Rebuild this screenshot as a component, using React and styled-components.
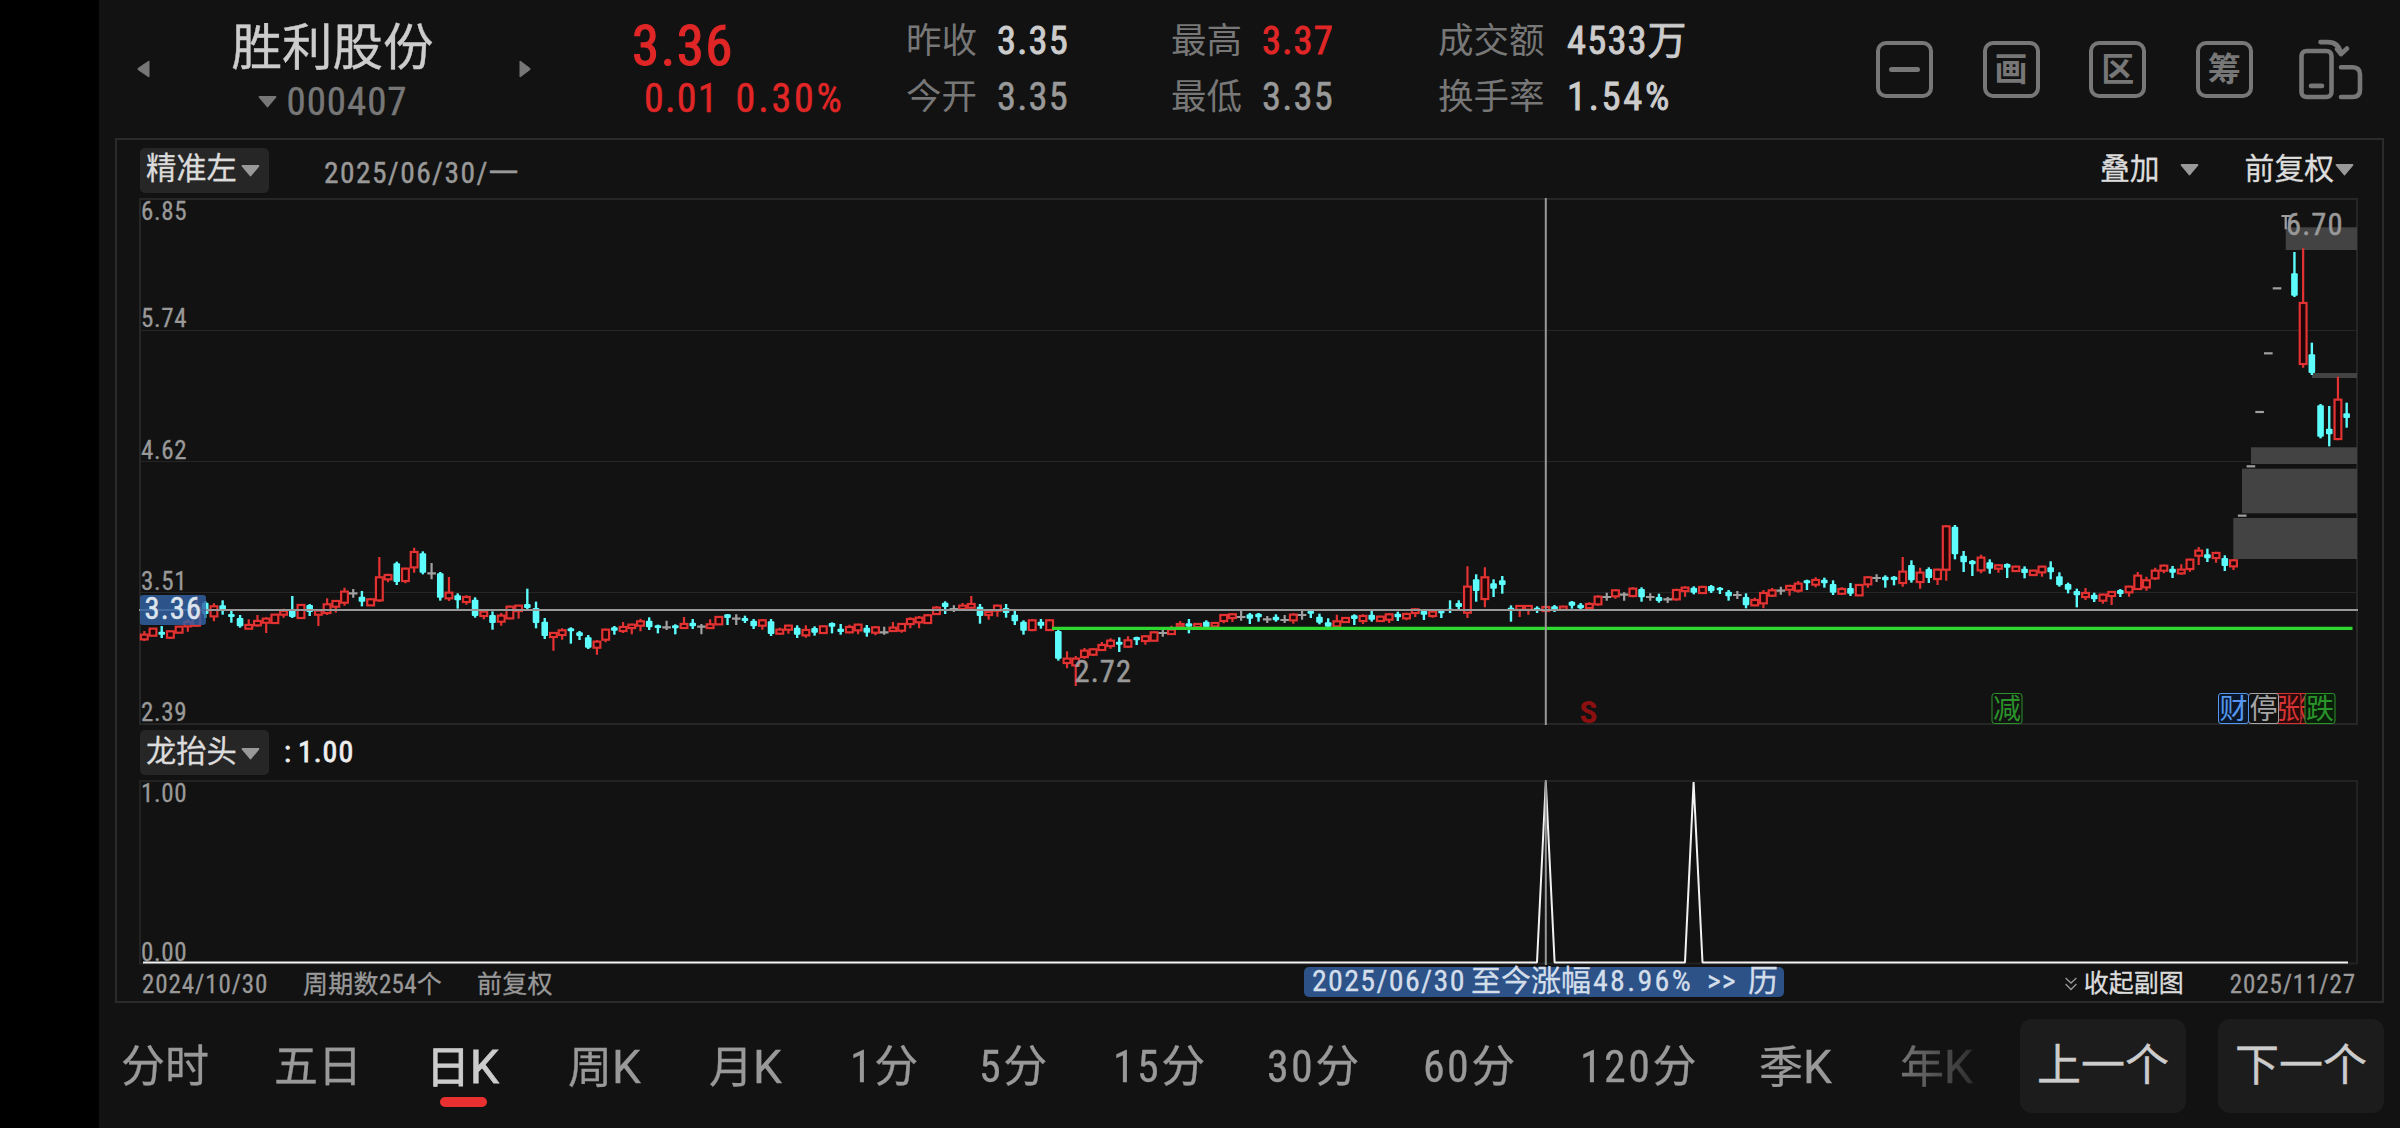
import React from "react";
import styled, { createGlobalStyle } from "styled-components";

const colors = {
  page: "#121212",
  line: "#2b2b2b",
  chip: "#262626",
  bright: "#dcdcdc",
  light: "#cccccc",
  mid: "#999999",
  dim: "#777777",
  red: "#e02626",
  up: "#e23232",
  down: "#5dfdfd",
  green: "#2fd82f",
  blue: "#2c5288",
};

const fonts = `"Roboto Condensed", Roboto, "Noto Sans CJK SC", sans-serif`;

const GlobalStyle = createGlobalStyle`
  * {
    box-sizing: border-box;
  }
  body {
    margin: 0;
    background: #000;
    font-family: ${fonts};
    overflow: hidden;
  }
`;

const Page = styled.div`
  width: 2400px;
  height: 1128px;
  padding-left: 99px;
  background: #000;
`;

const Screen = styled.div`
  height: 100%;
  display: flex;
  flex-direction: column;
  background: ${colors.page};
`;

const Header = styled.header`
  height: 138px;
  flex: none;
  display: flex;
  padding-left: 38px;
`;

const Pager = styled.div`
  width: 13px;
  padding-top: 60px;
  svg {
    display: block;
  }
`;

const Stock = styled.div`
  width: 369px;
  padding: 13px 4px 0 0;
  display: flex;
  flex-direction: column;
  align-items: center;
`;

const StockName = styled.div`
  font-size: 50.5px;
  line-height: 69px;
  color: ${colors.light};
  -webkit-text-stroke: 0.4px;
`;

const StockCode = styled.div`
  display: flex;
  align-items: center;
  gap: 10px;
  font-size: 39px;
  line-height: 40px;
  letter-spacing: 0.9px;
  color: ${colors.dim};
  -webkit-text-stroke: 0.4px;
`;

const Quote = styled.div`
  width: 374px;
  padding: 13px 0 0 100px;
  color: ${colors.red};
`;

const Price = styled.div`
  font-size: 55px;
  line-height: 67px;
  letter-spacing: 1.5px;
  -webkit-text-stroke: 1.2px;
`;

const Change = styled.div`
  display: flex;
  gap: 17px;
  padding-left: 12px;
  font-size: 40px;
  line-height: 38px;
  letter-spacing: 1.2px;
  -webkit-text-stroke: 0.5px;
`;

const Percent = styled.span`
  letter-spacing: 2.8px;
`;

const Stats = styled.div`
  display: grid;
  grid-template-columns: 265px 267px 438px;
  grid-template-rows: 56px 56px;
  padding-top: 13px;
`;

const Stat = styled.div`
  display: flex;
  line-height: 56px;
`;

const StatLabel = styled.div`
  width: ${({ $wide }) => ($wide ? 129 : 91)}px;
  font-size: 35.5px;
  color: ${colors.dim};
`;

const StatValue = styled.div`
  font-size: 38.5px;
  letter-spacing: ${({ $loose }) => ($loose ? 2.7 : 1.2)}px;
  color: ${({ $tone }) => colors[$tone]};
  -webkit-text-stroke: ${({ $tone }) => ($tone === "mid" ? 0.5 : 0.9)}px;
`;

const Tools = styled.div`
  display: flex;
  gap: 49.6px;
  padding-top: 40.5px;

  > svg {
    margin-left: -3px;
  }
`;

const Tool = styled.div`
  width: 57px;
  height: 57px;
  display: flex;
  align-items: center;
  justify-content: center;
  border: 4.5px solid ${colors.dim};
  border-radius: 10px;
  color: ${colors.dim};
  font-size: 33px;
  font-weight: 700;
  line-height: 48px;
  padding-top: 1px;
`;

const Minus = styled.div`
  width: 31px;
  height: 5px;
  border-radius: 3px;
  background: ${colors.dim};
`;

const Panel = styled.section`
  width: 2269px;
  height: 865px;
  flex: none;
  margin-left: 16px;
  border: 2px solid ${colors.line};
  display: flex;
  flex-direction: column;
`;

const ToolRow = styled.div`
  height: ${({ $height }) => $height}px;
  flex: none;
  display: flex;
  align-items: center;
  padding: ${({ $top }) => $top || 0}px 28px 0 23px;
`;

const Chip = styled.div`
  width: 129px;
  height: 45px;
  padding-left: 6px;
  display: flex;
  align-items: center;
  gap: 4px;
  border-radius: 5px;
  background: ${colors.chip};
  color: ${colors.bright};
  font-size: 30.3px;
  line-height: 42px;
  white-space: nowrap;
  -webkit-text-stroke: 0.3px;

  svg {
    position: relative;
    top: 1px;
  }
`;

const ChipLabel = styled.span`
  margin-top: -2px;
`;

const PickedDate = styled.div`
  margin: 5px auto 0 55px;
  font-size: 29.5px;
  line-height: 40px;
  letter-spacing: 1.4px;
  color: ${colors.mid};
  -webkit-text-stroke: 0.4px;
`;

const Option = styled.div`
  display: flex;
  align-items: center;
  gap: ${({ $gap }) => $gap}px;
  margin-left: 46px;
  color: ${colors.bright};
  font-size: 29.8px;
  line-height: 42px;
  -webkit-text-stroke: 0.3px;
`;

const SubValue = styled.div`
  margin: -3px 0 0 15px;
  font-size: 30px;
  letter-spacing: 1px;
  word-spacing: -2px;
  color: #eee;
  -webkit-text-stroke: 0.8px;
`;

const ChartSvg = styled.svg`
  display: block;
  flex: none;
  margin-left: 22px;
  overflow: visible;
  text {
    font-family: ${fonts};
  }
`;

const Footer = styled.div`
  position: relative;
  height: 36px;
  display: flex;
  align-items: center;
  padding: 3px 26px 0 25px;
  font-size: 25px;
  line-height: 30px;
  letter-spacing: 0.3px;
  color: ${colors.mid};
  -webkit-text-stroke: 0.3px;
`;

const FootItem = styled.div`
  width: ${({ $width }) => $width}px;
  letter-spacing: ${({ $loose }) => ($loose ? 0.9 : 0.3)}px;
  white-space: nowrap;
`;

const Collapse = styled.div`
  display: flex;
  align-items: center;
  gap: 7px;
  margin: -2px 46px 0 auto;
  letter-spacing: 0;
  color: ${colors.bright};
`;

const Banner = styled.div`
  position: absolute;
  left: 1187px;
  top: 2px;
  width: 480px;
  height: 30px;
  padding-left: 8px;
  display: flex;
  border-radius: 5px;
  background: ${colors.blue};
  color: #d3deea;
  font-size: 30px;
  line-height: 27px;
  white-space: nowrap;
`;

const BannerPart = styled.span`
  width: ${({ $width }) => $width}px;
  letter-spacing: ${({ $spacing }) => $spacing || 0}px;
`;

const BottomBar = styled.nav`
  flex: 1;
  display: flex;
  align-items: center;
`;

const Tabs = styled.div`
  width: 1905px;
  height: 100%;
  padding: 3px 0 0 22px;
  display: flex;
  align-items: center;
  mask-image: linear-gradient(to right, #000 1765px, transparent 1905px);
`;

const Tab = styled.div`
  position: relative;
  flex: none;
  width: ${({ $width }) => $width}px;
  font-size: 44px;
  line-height: 60px;
  color: ${({ $active }) => ($active ? colors.light : colors.mid)};
  -webkit-text-stroke: ${({ $active }) => ($active ? 0.9 : 0.3)}px;
  white-space: nowrap;

  &::after {
    content: "";
    display: ${({ $active }) => ($active ? "block" : "none")};
    position: absolute;
    left: 14px;
    bottom: -9px;
    width: 47px;
    height: 10px;
    border-radius: 5px;
    background: #e93030;
  }
`;

const TabDigits = styled.span`
  letter-spacing: 2.4px;
`;

const TabLetter = styled.span`
  font-family: Roboto, sans-serif;
  font-size: 46px;
`;

const StepButton = styled.div`
  width: 166px;
  height: 94px;
  margin-left: ${({ $first }) => ($first ? 16 : 32)}px;
  border-radius: 12px;
  background: #1c1c1c;
  color: ${colors.light};
  font-size: 44px;
  line-height: 94px;
  text-align: center;
  -webkit-text-stroke: 0.4px;
`;

// type, high, body top, body bottom, low; measured in thirds of a pixel from BASE_Y
const CANDLES = `
r 333 343 359 363,r 325 325 348 348,c 318 335 344 354,r 331 333 354 357,r 319 319 339 339,r 297 305 320 335,
r 237 262 318 320,c 244 248 282 294,r 250 258 290 304,c 241 256 269 284,c 267 282 291 308,c 285 294 319 323,
r 298 314 327 327,r 285 302 317 320,r 292 295 309 339,r 283 283 310 310,r 266 272 285 293,c 228 270 291 294,
r 254 254 295 297,c 252 255 276 288,r 268 271 285 318,r 235 252 280 285,r 242 242 261 278,r 203 214 249 257,
g 207 220 220 233,c 213 230 245 259,r 235 237 257 257,r 111 171 242 246,r 161 164 179 187,c 125 130 186 195,
r 143 145 184 190,r 83 95 143 158,c 94 100 158 163,g 129 160 160 178,c 156 160 233 242,r 171 217 236 243,
c 220 226 241 266,r 226 230 247 254,c 232 239 288 293,r 268 274 289 298,c 274 285 309 329,r 279 286 306 317,
r 257 259 296 298,r 256 256 274 296,c 206 252 264 270,c 245 264 309 325,c 294 305 348 357,r 336 338 352 392,
r 325 330 346 359,c 322 325 334 371,c 333 337 348 360,c 345 352 383 387,r 360 364 384 404,r 326 328 360 367,
c 318 322 332 344,r 306 320 334 339,r 311 313 325 343,r 296 303 318 334,c 292 302 322 330,c 314 316 324 340,
g 302 322 322 330,c 313 316 325 343,r 291 311 325 326,c 297 308 319 327,g 312 320 320 343,r 298 312 325 326,
r 288 290 314 314,c 282 283 294 315,g 283 296 296 315,c 287 294 303 309,c 297 302 319 327,r 297 300 318 329,
c 297 304 342 348,r 323 328 342 343,r 314 316 330 341,c 316 323 344 354,r 316 329 347 353,c 319 324 338 347,
r 317 318 340 340,c 307 309 320 340,c 312 326 336 344,r 314 320 338 340,r 311 313 332 343,c 315 323 338 350,
r 318 321 339 346,g 320 337 337 344,r 306 322 334 336,r 309 311 333 338,r 292 296 313 325,r 288 292 308 325,
r 282 285 310 311,r 258 262 283 285,c 244 248 261 282,g 256 267 267 276,r 249 256 268 268,r 228 251 264 266,
c 252 260 288 311,r 271 275 286 299,r 254 256 273 290,c 252 264 279 293,c 272 284 304 315,c 301 305 332 344,
r 297 300 331 334,c 297 305 317 326,r 297 300 331 333,c 329 333 416 422,r 394 415 430 445,r 408 415 437 498,
r 384 391 412 416,r 385 387 405 408,r 366 374 391 392,r 355 361 379 386,c 352 365 374 396,r 349 360 381 383,
c 350 351 361 375,r 346 348 364 374,r 334 336 363 364,g 328 339 339 350,r 317 328 343 344,r 303 311 320 322,
c 297 310 320 340,r 309 311 322 324,c 301 305 321 326,r 306 308 320 322,r 282 284 304 310,r 280 282 295 306,
g 273 291 291 302,c 279 283 296 312,c 279 281 292 305,g 288 298 298 309,c 283 290 301 305,g 285 300 300 309,
r 280 283 302 311,g 272 285 285 299,c 271 273 281 294,c 281 290 308 313,c 295 307 320 323,r 284 303 320 322,
r 291 293 307 309,c 283 286 297 315,r 283 287 304 312,c 273 284 299 305,r 287 289 304 306,r 280 282 300 309,
c 275 281 292 303,r 278 281 296 301,r 265 267 280 291,c 270 273 284 300,r 270 274 289 293,c 270 273 280 294,
c 241 266 270 279,c 241 249 261 270,r 139 199 279 294,c 163 178 213 245,r 142 171 238 262,c 178 190 206 231,
c 168 181 195 221,c 256 263 269 305,r 255 257 270 291,r 255 257 270 284,c 259 263 270 279,r 258 260 274 275,
c 255 259 270 276,r 257 259 270 271,c 243 245 257 266,c 249 254 265 269,r 247 251 265 268,r 226 229 254 257,
g 218 231 231 242,r 208 210 230 236,g 217 224 224 242,r 202 205 229 232,c 202 207 232 245,g 220 231 231 242,
c 221 231 243 248,g 231 238 238 249,r 206 209 239 242,r 199 202 214 230,c 199 203 218 223,r 197 200 220 221,
c 195 198 214 219,c 201 203 211 222,c 210 215 229 242,g 213 225 225 237,c 220 231 256 265,r 233 239 257 259,
r 210 218 251 265,r 204 210 228 231,g 200 212 212 224,r 194 197 210 227,r 183 190 213 218,c 179 181 190 210,
r 172 179 195 202,c 173 179 190 203,c 181 192 218 225,r 202 206 222 225,c 189 204 221 228,r 193 194 227 228,
r 169 171 194 203,g 163 174 174 186,c 166 170 181 203,c 168 170 180 196,r 111 154 190 200,c 121 135 181 188,
r 143 157 187 206,c 142 147 174 189,r 146 148 178 195,r 16 18 150 182,c 15 20 103 118,c 93 107 127 156,
c 120 122 133 168,r 104 112 152 160,c 118 127 146 161,r 133 135 147 158,c 130 132 143 174,r 137 139 154 155,
c 139 146 159 175,r 149 151 166 167,r 137 139 158 170,c 124 142 157 178,c 157 169 196 200,c 188 192 209 220,
c 206 213 226 262,r 204 218 232 240,c 218 224 238 246,r 221 223 243 251,r 213 215 229 255,c 207 210 222 231,
r 197 199 218 230,r 156 166 208 210,r 170 180 203 212,r 143 151 176 180,r 134 136 153 160,c 138 146 158 174,
r 133 148 161 164,r 116 118 148 155,r 81 91 108 135,c 86 103 115 126,r 95 98 115 128,c 106 114 138 153,
r 118 120 140 150,g -13 -13 -13 -13,g -161 -161 -161 -161,g -324 -324 -324 -324,g -500 -500 -500 -500,
g -695 -695 -695 -695,g -912 -912 -912 -872,c -804 -740 -673 -669,r -815 -652 -467 -457,c -532 -497 -441 -435,
c -348 -344 -250 -245,c -342 -274 -257 -221,r -430 -362 -242 -239,c -352 -320 -306 -277`
  .trim()
  .split(",")
  .map((item) => {
    const [type, ...values] = item.trim().split(" ");
    return [type, ...values.map(Number)];
  });

const BASE_Y = 520;
const FIRST_X = 144.3;
const STEP = 8.705;

// price gaps still open at the right edge: x, top, bottom
const GAPS = [
  [2285.7, 227.3, 250],
  [2312, 373, 378],
  [2251, 447.3, 464],
  [2242, 468.7, 513.3],
  [2233.3, 518, 559],
];

const PRICE_LABELS = [
  ["6.85", 220],
  ["5.74", 327],
  ["4.62", 459],
  ["3.51", 590],
  ["2.39", 721],
];

const EVENTS = [
  { label: "减", x: 1992, color: "#2a932a", back: "#121212" },
  { label: "涨", x: 2279, color: "#d63434", back: "#2a0a0a" },
  { label: "涨", x: 2271, color: "#d63434", back: "#2a0a0a" },
  { label: "跌", x: 2305, color: "#2a932a", back: "#0a1c0a" },
  { label: "停", x: 2248.5, color: "#a5a5a5", back: "#121212" },
  { label: "财", x: 2218.5, color: "#5597ee", back: "#0b1728" },
];

// leading digits, name, trailing letter, width
const TABS = [
  ["", "分时", "", 153],
  ["", "五日", "", 152],
  ["", "日", "K", 142],
  ["", "周", "K", 141],
  ["", "月", "K", 141],
  ["1", "分", "", 129],
  ["5", "分", "", 134],
  ["15", "分", "", 154],
  ["30", "分", "", 156],
  ["60", "分", "", 157],
  ["120", "分", "", 179],
  ["", "季", "K", 141],
  ["", "年", "K", 80],
];

const STATS = [
  ["昨收", "3.35", "light"],
  ["最高", "3.37", "red"],
  ["成交额", "4533万", "light"],
  ["今开", "3.35", "mid"],
  ["最低", "3.35", "mid"],
  ["换手率", "1.54%", "light"],
];

function Caret({ color = colors.mid }) {
  return (
    <svg width="19" height="12" viewBox="0 0 19 12">
      <path d="M1.5 1H17.5L9.5 10.5Z" fill={color} stroke={color} strokeWidth="1.8" strokeLinejoin="round" />
    </svg>
  );
}

function Arrow({ left }) {
  return (
    <Pager>
      <svg width="13" height="18" viewBox="0 0 13 18">
        <path
          d={left ? "M12 1V17L1 9.6V8.4Z" : "M1 1V17L11 9.6V8.4Z"}
          fill={colors.dim}
          stroke={colors.dim}
          strokeLinejoin="round"
        />
      </svg>
    </Pager>
  );
}

function RotateIcon() {
  return (
    <svg
      width="64"
      height="62"
      viewBox="2299.5 40.5 64 62"
      fill="none"
      stroke={colors.dim}
      strokeWidth="4.6"
      strokeLinecap="round"
      strokeLinejoin="round"
      overflow="visible"
    >
      <rect x="2302" y="50.5" width="30" height="46" rx="5" />
      <path d="M2311.5 85.4H2322.5" />
      <path d="M2321 41.6H2328C2336 41.6 2340 45.5 2341.5 53" />
      <path d="M2337.5 48.5L2341.5 53.6L2347.5 48" />
      <path d="M2341.5 66.8H2353Q2360.5 67 2360.5 74V89.5Q2360.5 96.4 2353 96.5H2341.5" />
    </svg>
  );
}

function Candle({ candle, index }) {
  const [type, ...values] = candle;
  const [high, top, bottom, low] = values.map((v) => BASE_Y + v / 3);
  const x = FIRST_X + STEP * index;
  if (type === "g") {
    return (
      <path d={`M${x} ${high}V${low}M${x - 4.3} ${top}H${x + 4.3}`} stroke="#a0a0a0" strokeWidth="2.2" />
    );
  }
  if (type === "c") {
    return (
      <g>
        <path d={`M${x} ${high}V${low}`} stroke={colors.down} strokeWidth="2.4" />
        <rect x={x - 3.3} y={top} width="6.6" height={Math.max(bottom - top, 2)} rx="1" fill={colors.down} />
      </g>
    );
  }
  return (
    <g stroke={colors.up} strokeWidth="2.2">
      <path d={`M${x} ${high}V${top}M${x} ${bottom}V${low}`} />
      <rect x={x - 3.4} y={top + 0.3} width="6.8" height={bottom - top - 0.6} fill="#1f0506" />
    </g>
  );
}

function PriceChart() {
  return (
    <ChartSvg width="2220" height="527" viewBox="139 198 2220 527">
      <g stroke="#262626" fill="none">
        <rect x="140" y="199" width="2217" height="525" strokeWidth="2" />
        <path d="M140 330.5H2357M140 461.5H2357M140 592.5H2357" />
      </g>
      {GAPS.map(([x, top, bottom]) => (
        <rect key={top} x={x} y={top} width={2357 - x} height={bottom - top} fill="#434343" />
      ))}
      {CANDLES.map((candle, index) => (
        <Candle key={index} candle={candle} index={index} />
      ))}
      <path d="M1052 628.4H2352.5" stroke={colors.green} strokeWidth="3.4" />
      <g fontSize="25" letterSpacing="0.7" fill={colors.mid} stroke={colors.mid} strokeWidth="0.3">
        {PRICE_LABELS.map(([label, y]) => (
          <text key={label} x="141" y={y}>
            {label}
          </text>
        ))}
      </g>
      <path d="M139 610H2358M1545.8 198V725" stroke="#989898" strokeWidth="2" />
      <rect x="140" y="595" width="66" height="30" rx="3" fill="#3263a6" opacity="0.82" />
      <g fontSize="30.5" letterSpacing="1.1" strokeWidth="0.5">
        <text x="144.5" y="619" fill="#dde4ee" stroke="#dde4ee">
          3.36
        </text>
        <text x="1074.5" y="682" fill={colors.mid} stroke={colors.mid}>
          2.72
        </text>
        <text x="2286" y="235" fill={colors.mid} stroke={colors.mid}>
          6.70
        </text>
      </g>
      <text x="1579.5" y="722.5" fontSize="31" fontWeight="700" textLength="18" lengthAdjust="spacingAndGlyphs" fill="#8d1010">
        S
      </text>
      {EVENTS.map(({ label, x, color, back }) => (
        <g key={x}>
          <rect x={x} y="693.5" width="30" height="30" rx="2.5" fill={back} stroke={color} />
          <text x={x + 1} y="718.5" fontSize="28" fill={color}>
            {label}
          </text>
        </g>
      ))}
    </ChartSvg>
  );
}

function SignalChart() {
  return (
    <ChartSvg width="2220" height="185" viewBox="139 780 2220 185">
      <rect x="140" y="781" width="2217" height="182.5" fill="none" stroke="#222" strokeWidth="2" />
      <g fontSize="25" letterSpacing="0.7" fill={colors.mid} stroke={colors.mid} strokeWidth="0.3">
        <text x="141" y="801.7">
          1.00
        </text>
        <text x="141" y="960.7">
          0.00
        </text>
      </g>
      <path
        d="M143 962.4H1537L1545.8 782L1554.6 962.4H1685L1693.6 782L1702.5 962.4H2348"
        fill="none"
        stroke="#f2f2f2"
        strokeWidth="2"
        strokeLinejoin="bevel"
      />
      <path d="M1545.8 780V965" stroke="#989898" strokeWidth="2" />
    </ChartSvg>
  );
}

export default function App() {
  return (
    <Page>
      <GlobalStyle />
      <Screen>
        <Header>
          <Arrow left />
          <Stock>
            <StockName>胜利股份</StockName>
            <StockCode>
              <Caret color={colors.dim} />
              000407
            </StockCode>
          </Stock>
          <Arrow />
          <Quote>
            <Price>3.36</Price>
            <Change>
              <span>0.01</span>
              <Percent>0.30%</Percent>
            </Change>
          </Quote>
          <Stats>
            {STATS.map(([label, value, tone]) => (
              <Stat key={label}>
                <StatLabel $wide={label.length === 3}>{label}</StatLabel>
                <StatValue $tone={tone} $loose={value.endsWith("%")}>
                  {value}
                </StatValue>
              </Stat>
            ))}
          </Stats>
          <Tools>
            <Tool>
              <Minus />
            </Tool>
            <Tool>画</Tool>
            <Tool>区</Tool>
            <Tool>筹</Tool>
            <RotateIcon />
          </Tools>
        </Header>

        <Panel>
          <ToolRow $height={58} $top={2}>
            <Chip>
              <ChipLabel>精准左</ChipLabel>
              <Caret />
            </Chip>
            <PickedDate>2025/06/30/一</PickedDate>
            <Option $gap={20}>
              <ChipLabel>叠加</ChipLabel>
              <Caret />
            </Option>
            <Option $gap={1}>
              <ChipLabel>前复权</ChipLabel>
              <Caret />
            </Option>
          </ToolRow>
          <PriceChart />
          <ToolRow $height={55}>
            <Chip>
              <ChipLabel>龙抬头</ChipLabel>
              <Caret />
            </Chip>
            <SubValue>: 1.00</SubValue>
          </ToolRow>
          <SignalChart />
          <Footer>
            <FootItem $width={161} $loose>
              2024/10/30
            </FootItem>
            <FootItem $width={174}>周期数254个</FootItem>
            <FootItem $width={76}>前复权</FootItem>
            <Banner>
              <BannerPart $width={159} $spacing={1.3}>
                2025/06/30
              </BannerPart>
              <BannerPart $width={122}>至今涨幅</BannerPart>
              <BannerPart $width={114} $spacing={2.3}>
                48.96%
              </BannerPart>
              <BannerPart $width={41} $spacing={1}>
                &gt;&gt;
              </BannerPart>
              <BannerPart>历</BannerPart>
            </Banner>
            <Collapse>
              <svg width="12" height="14" viewBox="0 0 12 14" fill="none" stroke={colors.mid} strokeWidth="1.3">
                <path d="M0.6 1L6 6L11.4 1M0.6 7L6 12.5L11.4 7" />
              </svg>
              收起副图
            </Collapse>
            <FootItem $loose>2025/11/27</FootItem>
          </Footer>
        </Panel>

        <BottomBar>
          <Tabs>
            {TABS.map(([digits, name, letter, width]) => (
              <Tab key={digits + name + letter} $width={width} $active={name === "日"}>
                {digits && <TabDigits>{digits}</TabDigits>}
                {name}
                {letter && <TabLetter>{letter}</TabLetter>}
              </Tab>
            ))}
          </Tabs>
          <StepButton $first>上一个</StepButton>
          <StepButton>下一个</StepButton>
        </BottomBar>
      </Screen>
    </Page>
  );
}
